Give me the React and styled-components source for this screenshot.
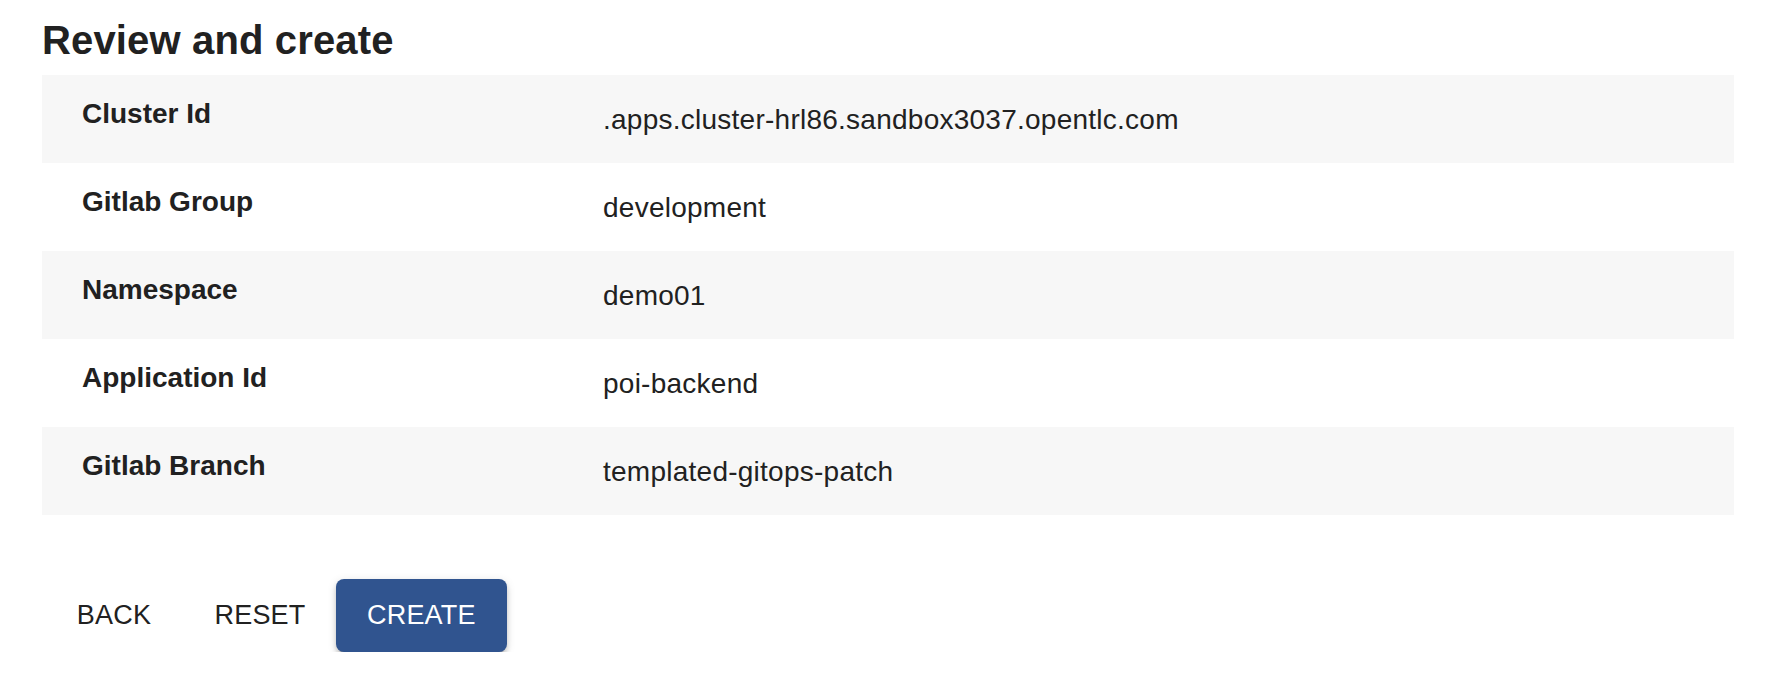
import React from "react";
import styled, { createGlobalStyle } from "styled-components";

const GlobalStyle = createGlobalStyle`
  html, body {
    margin: 0;
    padding: 0;
    background: #ffffff;
  }
  body {
    font-family: "Liberation Sans", Arial, Helvetica, sans-serif;
    color: #212121;
  }
`;

const Page = styled.main`
  padding: 16px 40px 0 42px;
`;

const Title = styled.h2`
  margin: 0 0 11px 0;
  font-size: 40px;
  line-height: 48px;
  font-weight: 700;
  letter-spacing: 0.15px;
  color: #212121;
`;

const Summary = styled.div`
  display: flex;
  flex-direction: column;
`;

const Row = styled.div`
  display: grid;
  grid-template-columns: 521px 1fr;
  height: 88px;
  padding-left: 40px;
  background: ${(p) => (p.$shaded ? "#f7f7f7" : "#ffffff")};
`;

const Label = styled.div`
  padding-top: 22.5px;
  font-size: 28px;
  line-height: 32px;
  font-weight: 700;
`;

const Value = styled.div`
  padding-top: 28.5px;
  font-size: 28px;
  line-height: 32px;
  font-weight: 400;
  letter-spacing: 0.25px;
`;

const Actions = styled.div`
  display: flex;
  align-items: center;
  gap: 12px;
  margin-top: 64px;
  padding-left: 8px;
`;

const Button = styled.button`
  min-width: 128px;
  height: 73px;
  padding: 0 ${(p) => (p.$primary ? "31px" : "16px")};
  margin-right: ${(p) => (p.$spaced ? "6px" : "0")};
  border: none;
  border-radius: 8px;
  font-family: inherit;
  font-size: 27px;
  font-weight: 400;
  letter-spacing: 0.2px;
  text-transform: uppercase;
  cursor: pointer;
  color: ${(p) => (p.$primary ? "#ffffff" : "#212121")};
  background: ${(p) => (p.$primary ? "#30548f" : "transparent")};
  box-shadow: ${(p) =>
    p.$primary
      ? "0 6px 2px -4px rgba(0,0,0,0.22), 0 4px 5px 0 rgba(0,0,0,0.16), 0 2px 10px 0 rgba(0,0,0,0.12)"
      : "none"};
`;

const fields = [
  ["Cluster Id", ".apps.cluster-hrl86.sandbox3037.opentlc.com"],
  ["Gitlab Group", "development"],
  ["Namespace", "demo01"],
  ["Application Id", "poi-backend"],
  ["Gitlab Branch", "templated-gitops-patch"],
];

export default function App() {
  return (
    <>
      <GlobalStyle />
      <Page>
        <Title>Review and create</Title>
        <Summary>
          {fields.map(([label, value], i) => (
            <Row key={label} $shaded={i % 2 === 0}>
              <Label>{label}</Label>
              <Value>{value}</Value>
            </Row>
          ))}
        </Summary>
        <Actions>
          <Button $spaced>Back</Button>
          <Button>Reset</Button>
          <Button $primary>Create</Button>
        </Actions>
      </Page>
    </>
  );
}
